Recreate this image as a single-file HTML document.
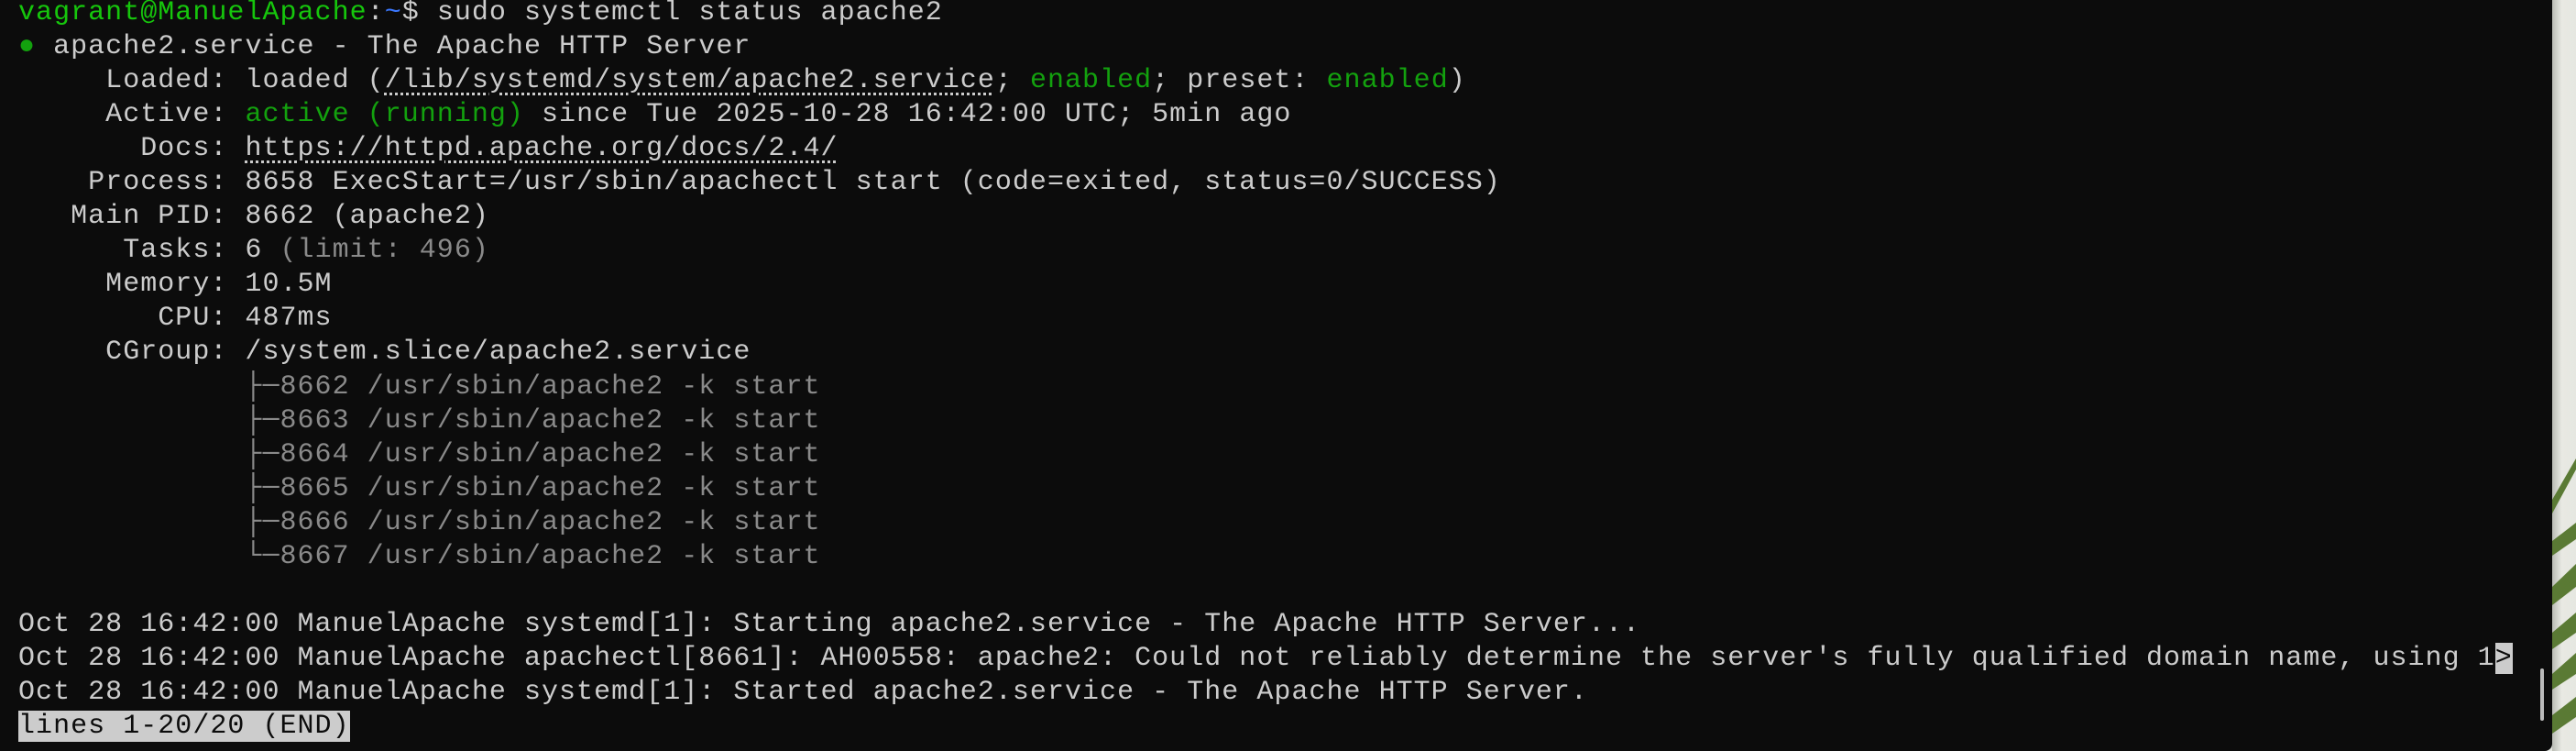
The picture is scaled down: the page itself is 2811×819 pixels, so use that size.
<!DOCTYPE html>
<html><head><meta charset="utf-8"><style>
html,body{margin:0;padding:0;width:2811px;height:819px;overflow:hidden;background:#e4e6e0}
#term{position:absolute;left:0;top:0;width:2785px;height:819px;background:#0c0c0c;border-bottom-right-radius:8px;overflow:hidden}
pre{position:absolute;left:20px;top:-4px;margin:0;font-family:"Liberation Mono","DejaVu Sans Mono",monospace;font-size:30px;letter-spacing:1.03px;line-height:37.05px;color:#cccccc;white-space:pre}
.g{color:#16c60c}.gb{color:#13a10e}.b{color:#3b78ff}.d{color:#8a8a8a}
.u{text-decoration:underline dotted;text-underline-offset:6px}
.h{background:#cccccc;color:#0c0c0c}
#sb{position:absolute;left:2772px;top:729px;width:4px;height:57px;background:#bbb;border-radius:2px}
#right{position:absolute;left:2785px;top:0;width:26px;height:819px;background:linear-gradient(90deg,#b9bbb4,#e8e9e3 40%,#e6e7e1)}
</style></head><body>
<div id="right"><svg width="26" height="819" style="position:absolute;left:0;top:0">
<g fill="#5a7a34">
<polygon points="0,545 26,500 26,512 0,560"/>
<polygon points="0,590 26,570 26,588 0,606"/>
<polygon points="0,640 26,615 26,640 0,660"/>
<polygon points="0,690 26,668 26,690 0,708"/>
<polygon points="0,735 26,712 26,735 0,752"/>
<polygon points="0,780 26,760 26,782 0,800"/>
</g></svg></div>
<div id="term">
<pre><span class="g">vagrant@ManuelApache</span>:<span class="b">~</span>$ sudo systemctl status apache2
<span class="gb">●</span> apache2.service - The Apache HTTP Server
     Loaded: loaded (<span class="u">/lib/systemd/system/apache2.service</span>; <span class="gb">enabled</span>; preset: <span class="gb">enabled</span>)
     Active: <span class="gb">active (running)</span> since Tue 2025-10-28 16:42:00 UTC; 5min ago
       Docs: <span class="u">https://httpd.apache.org/docs/2.4/</span>
    Process: 8658 ExecStart=/usr/sbin/apachectl start (code=exited, status=0/SUCCESS)
   Main PID: 8662 (apache2)
      Tasks: 6 <span class="d">(limit: 496)</span>
     Memory: 10.5M
        CPU: 487ms
     CGroup: /system.slice/apache2.service
<span class="d">             ├─8662 /usr/sbin/apache2 -k start
             ├─8663 /usr/sbin/apache2 -k start
             ├─8664 /usr/sbin/apache2 -k start
             ├─8665 /usr/sbin/apache2 -k start
             ├─8666 /usr/sbin/apache2 -k start
             └─8667 /usr/sbin/apache2 -k start</span>

Oct 28 16:42:00 ManuelApache systemd[1]: Starting apache2.service - The Apache HTTP Server...
Oct 28 16:42:00 ManuelApache apachectl[8661]: AH00558: apache2: Could not reliably determine the server's fully qualified domain name, using 1<span class="h">&gt;</span>
Oct 28 16:42:00 ManuelApache systemd[1]: Started apache2.service - The Apache HTTP Server.
<span class="h">lines 1-20/20 (END)</span></pre>
<div id="sb"></div>
</div>
</body></html>
